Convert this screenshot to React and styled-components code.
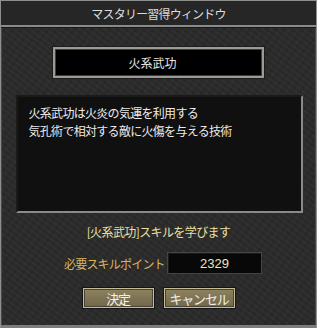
import React from "react";
import styled, { createGlobalStyle } from "styled-components";

const GlobalStyle = createGlobalStyle`
  html, body {
    margin: 0;
    padding: 0;
    background: #000;
  }
  * {
    box-sizing: border-box;
  }
`;

const App = () => {
  return (
    <>
      <GlobalStyle />
      <Window>
        <TitleBar>マスタリー習得ウィンドウ</TitleBar>
        <Body>
          <SkillBox>火系武功</SkillBox>
          <DescBox>
            <DescLine>火系武功は火炎の気運を利用する</DescLine>
            <DescLine>気孔術で相対する敵に火傷を与える技術</DescLine>
          </DescBox>
          <LearnText>[火系武功]スキルを学びます</LearnText>
          <PointRow>
            <PointLabel>必要スキルポイント</PointLabel>
            <PointValue>2329</PointValue>
          </PointRow>
          <ButtonRow>
            <GoldButton>決定</GoldButton>
            <GoldButton>キャンセル</GoldButton>
          </ButtonRow>
        </Body>
      </Window>
    </>
  );
};

const Window = styled.div`
  width: 317px;
  height: 328px;
  display: flex;
  flex-direction: column;
  border: 1px solid #8e8e8e;
  border-bottom-width: 0;
  box-shadow: inset 1px 0 0 #4a4a4a, inset -1px 0 0 #4a4a4a;
  background-color: #2b2b2b;
  background-image:
    repeating-linear-gradient(37deg, rgba(255, 255, 255, 0.025) 0 2px, transparent 2px 5px),
    repeating-linear-gradient(-53deg, rgba(0, 0, 0, 0.08) 0 3px, transparent 3px 7px);
  font-family: "Noto Sans CJK JP", "DejaVu Sans", sans-serif;
  font-size: 12px;
  overflow: hidden;
`;

const TitleBar = styled.div`
  height: 26px;
  flex: none;
  display: flex;
  align-items: center;
  justify-content: center;
  color: #dcdcdc;
  background: #262626;
  border-bottom: 2px solid #8a8a8a;
  box-shadow: 0 1px 0 #1a1a1a;
  letter-spacing: -0.8px;
  padding-top: 1px;
`;

const Body = styled.div`
  flex: 1;
  display: flex;
  flex-direction: column;
  align-items: center;
  padding-top: 20px;
  border-bottom: 3px solid #7c7c7c;
`;

const SkillBox = styled.div`
  width: 211px;
  height: 31px;
  display: flex;
  align-items: center;
  justify-content: center;
  background: #000;
  color: #e8e8e8;
  border: 2px solid #9c9c94;
  box-shadow: inset 0 0 0 1px #3e3e3a, 0 0 0 1px #1c1c1c;
  padding-right: 12px;
`;

const DescBox = styled.div`
  width: 287px;
  height: 118px;
  margin-top: 17px;
  margin-left: 1px;
  padding: 7px 11px;
  background: #101010;
  border-top: 2px solid #1a1a1a;
  border-left: 2px solid #1a1a1a;
  border-right: 2px solid #8a8a8a;
  border-bottom: 2px solid #8a8a8a;
  color: #ececec;
`;

const DescLine = styled.div`
  line-height: 18px;
  letter-spacing: -0.7px;
  white-space: nowrap;
`;

const LearnText = styled.div`
  margin-top: 11px;
  line-height: 16px;
  color: #ece0a4;
  letter-spacing: -0.6px;
`;

const PointRow = styled.div`
  align-self: stretch;
  display: flex;
  align-items: center;
  gap: 8px;
  margin-top: 12px;
  padding-left: 63px;
`;

const PointLabel = styled.div`
  width: 95px;
  color: #dcb45c;
  letter-spacing: -0.8px;
  white-space: nowrap;
`;

const PointValue = styled.div`
  width: 95px;
  height: 22px;
  display: flex;
  align-items: center;
  justify-content: center;
  background: #080808;
  border: 1px solid #444;
  box-shadow: inset 1px 1px 0 #1a1a1a;
  color: #ece4c4;
  font-family: "Liberation Sans", Arial, sans-serif;
  font-size: 13px;
`;

const ButtonRow = styled.div`
  display: flex;
  gap: 8px;
  margin-top: 13px;
`;

const GoldButton = styled.button`
  width: 73px;
  height: 22px;
  padding: 0;
  display: flex;
  align-items: center;
  justify-content: center;
  font-family: inherit;
  font-size: 13px;
  color: #f4f0e4;
  background: linear-gradient(180deg, #8f8462 0%, #7d7354 55%, #706748 100%);
  border: 1px solid #141414;
  box-shadow: inset 0 0 0 1px #c4bc98, inset 0 0 0 2px #4a4434;
  letter-spacing: -1.2px;
  cursor: pointer;
`;

export default App;
